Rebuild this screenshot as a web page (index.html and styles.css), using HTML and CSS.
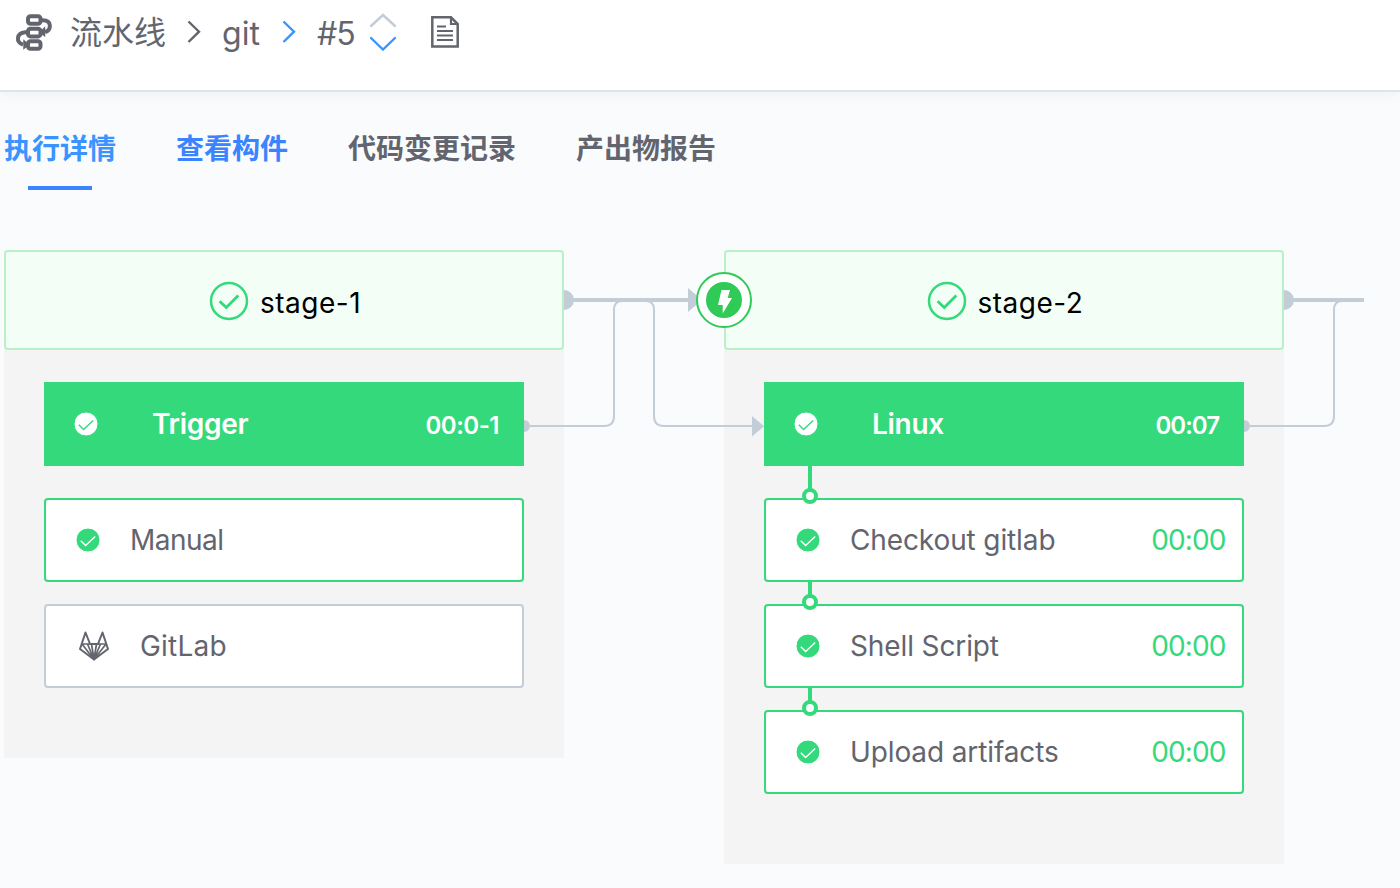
FILE: index.html
```html
<!DOCTYPE html>
<html lang="zh-CN">
<head>
<meta charset="utf-8">
<title>流水线</title>
<link rel="stylesheet" href="styles.css">
</head>
<body>
<svg class="defs" width="0" height="0">
  <symbol id="check-solid" viewBox="0 0 24 24"><circle cx="12" cy="12" r="12" fill="currentColor"/><path d="M4.8 12.8l4.8 4.7 9.6-9.1" fill="none" stroke-width="1.4"/></symbol>
  <symbol id="check-ring" viewBox="0 0 40 40"><circle cx="20" cy="20" r="18" fill="none" stroke="currentColor" stroke-width="2.500"/><path d="M10.600 20.300l6.700 6.300 12-12" fill="none" stroke="currentColor" stroke-width="2.800"/></symbol>
</svg>
<header class="topbar">
  <svg class="logo" viewBox="0 0 38 38" fill="none" stroke="currentColor" stroke-width="4">
    <rect x="13" y="2.200" width="12.500" height="7.600" rx="2.500"/><rect x="13" y="14.800" width="12.500" height="7.600" rx="2.500"/><rect x="13" y="27.200" width="12.500" height="7.600" rx="2.500"/>
    <path d="M26 6.200h2c8.500 0 9 9.300 2 12M12 18.300h-2C1.500 19 .500 28.500 8 30.500"/>
    <path d="M29.500 14v7.500l-4.500-3zM9 26.800v7.500l4.500-3.500z" fill="currentColor" stroke-width="1.500"/>
  </svg>
  <span class="crumb crumb-root">流水线</span>
  <svg class="chevron" viewBox="0 0 14 24"><path d="M1.500 1.500L12 11.700 1.500 22"/></svg>
  <span class="crumb crumb-name">git</span>
  <svg class="chevron chevron-active" viewBox="0 0 14 24"><path d="M1.500 1.500L12 11.700 1.500 22"/></svg>
  <span class="crumb crumb-build">#5</span>
  <svg class="stepper" viewBox="0 0 26 38"><path class="up" d="M1 13L13 2 25 13"/><path class="down" d="M1 25L13 36.500 25 25"/></svg>
  <svg class="doc" viewBox="0 0 28 32" fill="none" stroke="currentColor" stroke-width="2.500"><path d="M1.300 1.300H20L26.700 8v22.600H1.300z"/><path d="M20 1v7h7M6 10.500h9M6 15h16M6 19.500h16M6 24h16" stroke-width="2.200"/></svg>
</header>
<nav class="tabs">
  <a class="tab current">执行详情</a>
  <a class="tab linked">查看构件</a>
  <a class="tab">代码变更记录</a>
  <a class="tab">产出物报告</a>
</nav>
<main class="pipeline">
  <section class="stage">
    <h2 class="stage-head"><svg class="ring"><use href="#check-ring"/></svg><span class="stage-name">stage-1</span></h2>
    <div class="jobs">
      <div class="job"><svg class="check"><use href="#check-solid"/></svg><span class="job-name">Trigger</span><span class="job-time pending">00:0-1</span></div>
      <div class="step"><svg class="check"><use href="#check-solid"/></svg><span class="step-name name-manual">Manual</span></div>
      <div class="step idle">
        <svg class="gitlab" viewBox="0 0 30 30" fill="none" stroke="currentColor" stroke-width="2" stroke-linejoin="round"><path d="M1 18L6.500 1.500 11 13h8L23.500 1.500 29 18 15 28.500z"/><path d="M3 13h24M3 13l12 15.500L27 13M8.500 13l6.500 15.500L21.500 13M12.500 13L15 28.500 17.500 13" stroke-width="1.700"/></svg>
        <span class="step-name name-gitlab">GitLab</span>
      </div>
    </div>
    <svg class="wires" viewBox="0 0 240 200">
      <path class="dot" d="M40 40a10 10 0 0 1 0 20zM0 170a6 6 0 0 1 0 12zM164 38l14 12-14 12zM228 166l12 10.300-12 10.300z"/>
      <path class="main" d="M48 50h118"/>
      <path class="branch" d="M4 176h76q10 0 10-10V60q0-9 8-9M122 51q8 0 8 9v106q0 10 10 10h90"/>
    </svg>
  </section>
  <section class="stage second">
    <svg class="bolt" viewBox="0 0 56 56"><circle cx="28" cy="28" r="27" fill="#fff" stroke="#2fcb56" stroke-width="2"/><circle cx="28" cy="28" r="18" fill="#2fcb56"/><path d="M25.500 18H34l-2.300 8H36l-9.300 15.500V33H22z" fill="#fff"/></svg>
    <h2 class="stage-head"><svg class="ring"><use href="#check-ring"/></svg><span class="stage-name">stage-2</span></h2>
    <div class="jobs">
      <div class="job"><svg class="check"><use href="#check-solid"/></svg><span class="job-name">Linux</span><span class="job-time">00:07</span></div>
      <div class="step chained first"><svg class="check"><use href="#check-solid"/></svg><span class="step-name">Checkout gitlab</span><span class="step-time">00:00</span></div>
      <div class="step chained"><svg class="check"><use href="#check-solid"/></svg><span class="step-name">Shell Script</span><span class="step-time">00:00</span></div>
      <div class="step chained"><svg class="check"><use href="#check-solid"/></svg><span class="step-name">Upload artifacts</span><span class="step-time">00:00</span></div>
    </div>
    <svg class="wires short" viewBox="0 0 120 200">
      <path class="dot" d="M40 40a10 10 0 0 1 0 20zM0 170a6 6 0 0 1 0 12z"/>
      <path class="main" d="M48 50h72"/>
      <path class="branch" d="M4 176h76q10 0 10-10V60q0-9 8-9"/>
    </svg>
  </section>
</main>
</body>
</html>
```
FILE: styles.css
```css
*, *::before, *::after { box-sizing: border-box; }
body {
  margin: 0;
  height: 888px;
  overflow: hidden;
  background: #fafbfd;
  color: #63656e;
  font-family: Inter, "Noto Sans CJK SC", sans-serif;
}
svg { display: block; flex: none; }
.defs { position: absolute; }
span { white-space: nowrap; }

.topbar {
  display: flex;
  height: 92px;
  padding-left: 15px;
  align-items: flex-start;
  background: #fff;
  border-bottom: 2px solid #dde4eb;
  box-shadow: 0 4px 10px rgba(100, 110, 120, .06);
}
.logo { width: 38px; height: 38px; margin-top: 14px; }
.crumb { font-size: 32px; line-height: 68px; }
.crumb-root { width: 96px; margin-left: 17px; line-height: 66px; }
.crumb-name { width: 40px; margin-left: 20px; padding-left: 1px; }
.crumb-build { width: 38px; margin-left: 21px; letter-spacing: -1px; }
.chevron {
  width: 14px;
  height: 24px;
  margin: 20px 0 0 21px;
  fill: none;
  stroke: currentColor;
  stroke-width: 2.4;
}
.chevron-active { color: #3a94ff; }
.stepper {
  width: 26px;
  height: 38px;
  margin: 13px 0 0 15px;
  fill: none;
  stroke-width: 2.4;
  stroke-linecap: round;
}
.up { stroke: #c3cdd7; }
.down { stroke: #3a94ff; }
.doc { width: 28px; height: 32px; margin: 16px 0 0 35px; }

.tabs { display: flex; gap: 60px; height: 158px; padding: 26px 0 0 4px; }
.tab {
  position: relative;
  height: 72px;
  font-size: 28px;
  font-weight: 700;
  line-height: 62px;
}
.current { color: #3a94ff; }
.linked { color: #3a84ff; }
.current::after {
  content: "";
  position: absolute;
  left: 24px;
  top: 68px;
  width: 64px;
  height: 4px;
  background: #3a84ff;
}

.pipeline { display: flex; align-items: flex-start; gap: 160px; padding-left: 4px; }
.stage { position: relative; width: 560px; flex: none; background: #f4f4f4; }
.stage-head {
  display: flex;
  align-items: center;
  height: 100px;
  margin: 0;
  padding: 2px 0 0 203px;
  gap: 11px;
  border: 2px solid #bbefc9;
  border-radius: 4px;
  background: #f3fff6;
  color: #000;
  font-size: 28px;
  font-weight: 400;
}
.second .stage-head { padding-left: 200.5px; }
.stage-name { padding-top: 3px; letter-spacing: .5px; }
.ring { width: 40px; height: 40px; color: #34d97b; }
.bolt { position: absolute; left: -28px; top: 22px; width: 56px; height: 56px; z-index: 2; }
.jobs { padding: 32px 40px 70px; }
.job {
  display: flex;
  align-items: center;
  height: 84px;
  margin-bottom: 32px;
  padding: 0 24px 0 30px;
  background: #34d97b;
  color: #fff;
  font-weight: 600;
}
.check { width: 24px; height: 24px; margin-bottom: 1px; stroke: #fff; overflow: visible; }
.job .check { stroke: #34d97b; }
.job-name { margin-left: 54px; font-size: 28px; letter-spacing: -.3px; }
.job-time { margin: 0 1px 0 auto; padding-top: 3px; font-size: 24px; letter-spacing: -1px; }
.pending { letter-spacing: -.5px; }
.step {
  position: relative;
  display: flex;
  align-items: center;
  height: 84px;
  padding: 0 16.5px 0 30px;
  border: 2px solid #34d97b;
  border-radius: 4px;
  background: #fff;
  font-size: 28px;
}
.step + .step { margin-top: 22px; }
.step .check { color: #34d97b; }
.step-name { margin-left: 30px; letter-spacing: -.12px; }
.name-manual { letter-spacing: -.5px; }
.name-gitlab { margin-left: 31px; letter-spacing: .2px; }
.step-time { margin-left: auto; color: #34d97b; letter-spacing: -.9px; }
.idle { border-color: #c3cdd7; }
.gitlab { width: 30px; height: 30px; margin-left: 3px; }
.chained::before {
  content: "";
  position: absolute;
  left: 42px;
  top: -24px;
  width: 4px;
  height: 20px;
  background: #34d97b;
}
.chained.first::before { top: -34px; height: 30px; }
.chained::after {
  content: "";
  position: absolute;
  left: 36px;
  top: -12px;
  width: 16px;
  height: 16px;
  border: 4px solid #34d97b;
  border-radius: 50%;
  background: #fff;
}
.wires { position: absolute; z-index: 1; left: 520px; top: 0; width: 240px; height: 200px; fill: none; }
.short { width: 120px; }
.wires .dot { fill: #c3cdd7; }
.wires .main { stroke: #c3cdd7; stroke-width: 4; }
.wires .branch { stroke: #c3cdd7; stroke-width: 2; }
```
